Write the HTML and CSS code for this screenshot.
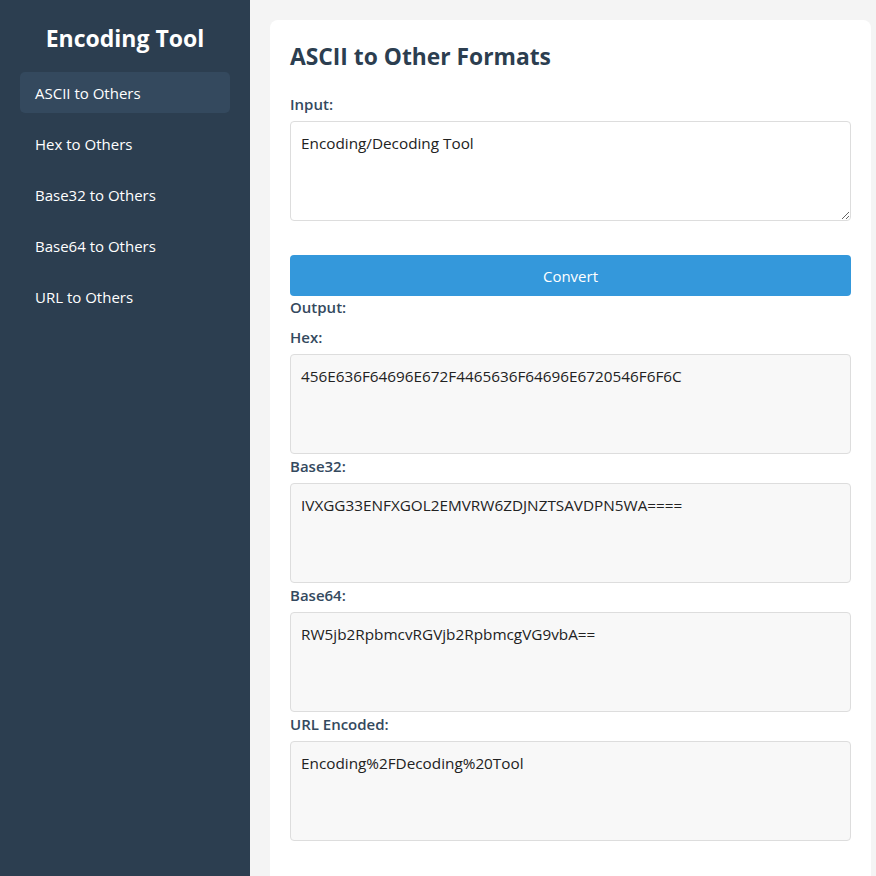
FILE: index.html
```html
<!DOCTYPE html>
<html lang="en">
<head>
<meta charset="utf-8">
<title>Encoding Tool</title>
<link rel="stylesheet" href="styles.css">
</head>
<body>
<div class="layout">
  <aside class="sidebar">
    <h1 class="brand">Encoding Tool</h1>
    <nav class="nav">
      <a class="nav-item active" href="#">ASCII to Others</a>
      <a class="nav-item" href="#">Hex to Others</a>
      <a class="nav-item" href="#">Base32 to Others</a>
      <a class="nav-item" href="#">Base64 to Others</a>
      <a class="nav-item" href="#">URL to Others</a>
    </nav>
  </aside>
  <main class="main">
    <section class="card">
      <h2 class="card-title">ASCII to Other Formats</h2>
      <label class="label">Input:</label>
      <textarea class="input">Encoding/Decoding Tool</textarea>
      <button class="btn">Convert</button>
      <div class="label output-label">Output:</div>
      <div class="label">Hex:</div>
      <div class="out">456E636F64696E672F4465636F64696E6720546F6F6C</div>
      <div class="label">Base32:</div>
      <div class="out">IVXGG33ENFXGOL2EMVRW6ZDJNZTSAVDPN5WA====</div>
      <div class="label">Base64:</div>
      <div class="out">RW5jb2RpbmcvRGVjb2RpbmcgVG9vbA==</div>
      <div class="label">URL Encoded:</div>
      <div class="out">Encoding%2FDecoding%20Tool</div>
    </section>
  </main>
</div>
</body>
</html>
```

FILE: styles.css
```css
* { box-sizing: border-box; }
html, body { margin: 0; padding: 0; }
body {
  font-family: "Open Sans", "Noto Sans", sans-serif;
  background: #f4f4f4;
  color: #333;
  overflow: hidden;
}
.layout {
  display: flex;
  min-height: 100vh;
}
.sidebar {
  width: 250px;
  flex: 0 0 250px;
  background: #2c3e50;
  color: #fff;
  padding: 20px;
}
.brand {
  margin: 2px 0 18px;
  font-size: 23px;
  line-height: 32px;
  text-align: center;
  font-weight: 700;
}
.nav {
  display: flex;
  flex-direction: column;
  gap: 10px;
}
.nav-item {
  display: block;
  color: #fff;
  text-decoration: none;
  font-size: 15px;
  line-height: 21px;
  padding: 11px 15px 9px;
  border-radius: 5px;
}
.nav-item.active { background: #34495e; }
.main {
  flex: 1;
  padding: 20px 5px 0 20px;
}
.card {
  background: #fff;
  border-radius: 8px;
  padding: 20px;
  min-height: 900px;
}
.card-title {
  margin: 1px 0 21px;
  font-size: 22.8px;
  line-height: 32px;
  color: #2c3e50;
  font-weight: 700;
}
.label {
  display: block;
  font-weight: 600;
  font-size: 15px;
  line-height: 21px;
  color: #34495e;
  margin-bottom: 6px;
}
.output-label { margin-top: 1px; margin-bottom: 9px; }
.input {
  display: block;
  width: 100%;
  height: 100px;
  border: 1px solid #ddd;
  border-radius: 4px;
  padding: 10px;
  font-family: inherit;
  font-size: 15.3px;
  line-height: 22px;
  color: #222;
  margin: 0 0 34px;
}
.btn {
  display: block;
  width: 100%;
  height: 41px;
  border: none;
  border-radius: 4px;
  background: #3498db;
  color: #fff;
  font-family: inherit;
  font-size: 15px;
}
.out {
  height: 100px;
  border: 1px solid #ddd;
  border-radius: 4px;
  background: #f8f8f8;
  padding: 10px;
  font-size: 15.3px;
  line-height: 22px;
  color: #222;
  margin-bottom: 2px;
}
```
